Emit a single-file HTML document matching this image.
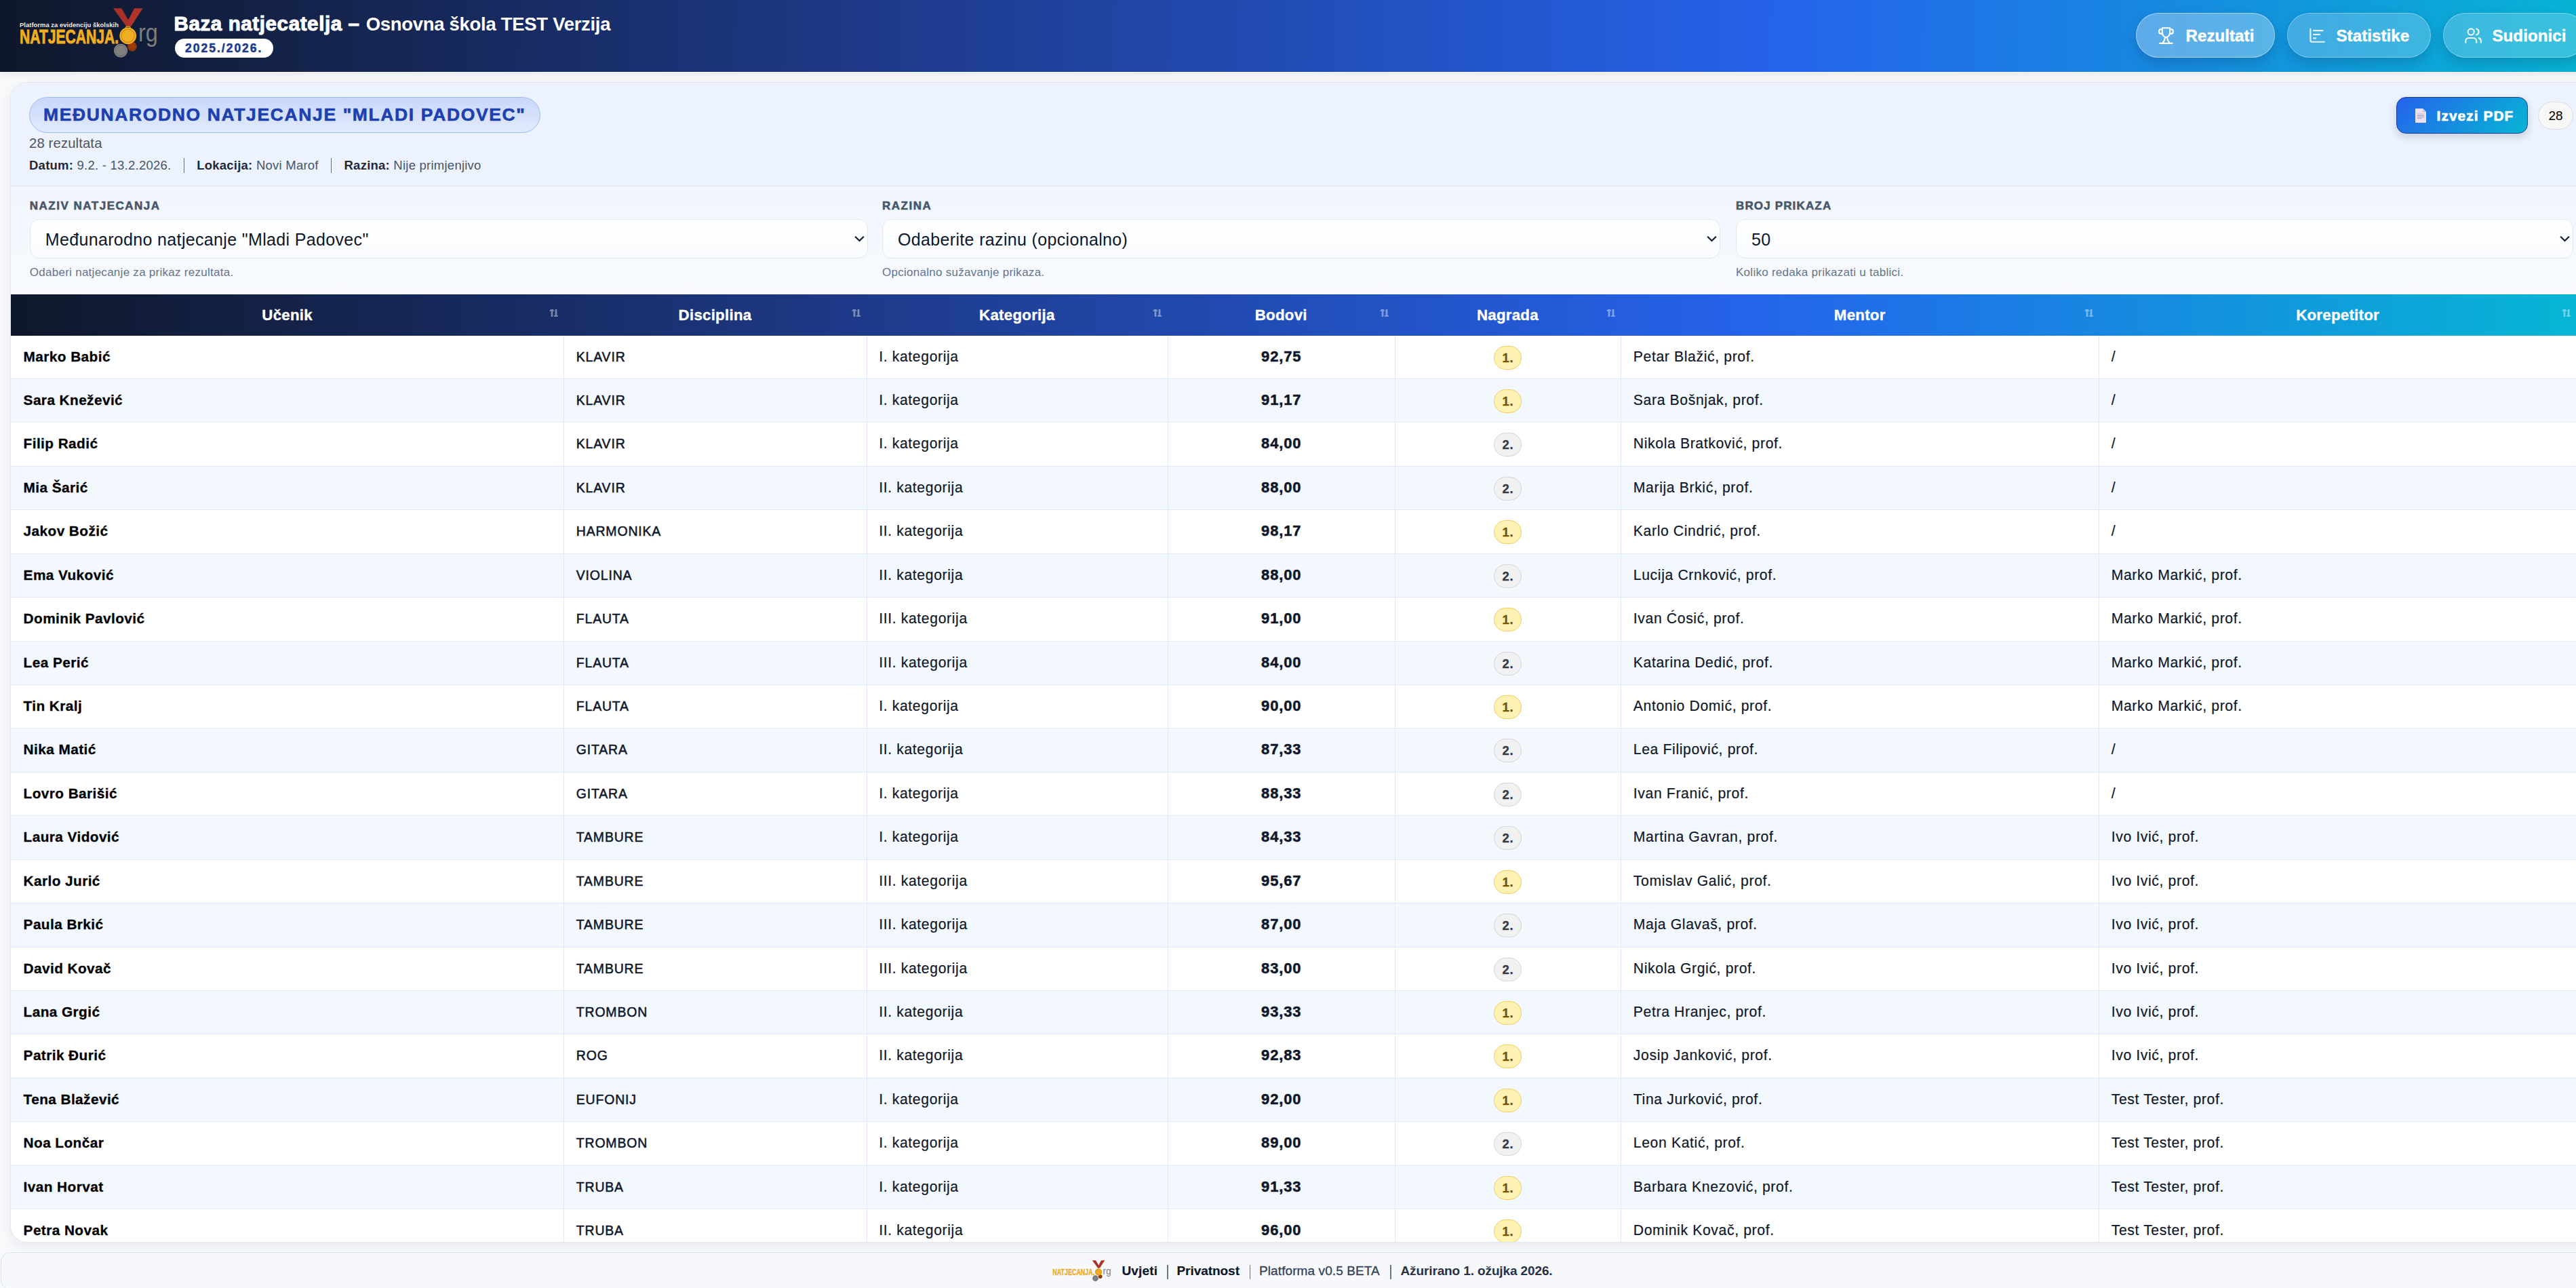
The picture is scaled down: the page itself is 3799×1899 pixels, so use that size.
<!DOCTYPE html>
<html lang="hr"><head><meta charset="utf-8"><title>Baza natjecatelja</title>
<style>
html,body{margin:0;padding:0;overflow:hidden;width:3799px;height:1899px}
#root{position:relative;width:3799px;height:1899px;overflow:hidden}
#page{position:absolute;left:0;top:0;width:3838px;height:1899px;background:#f8f9fb}
body{position:relative;background:#f8f9fb;font-family:"Liberation Sans",sans-serif;color:#0f172a}
*{box-sizing:border-box}
.hdr{position:absolute;left:0;top:0;width:3838px;height:106px;background:linear-gradient(91deg,#0f172a 0%,#1e3a8a 34%,#2563eb 68.5%,#06b6d4 100%);box-shadow:0 3px 10px rgba(15,23,42,.085);z-index:3}
.hdr:after{content:'';position:absolute;left:0;top:106px;width:100%;height:1px;background:#fafaf8}
.logo{position:absolute;left:29px;top:12px;width:205px;height:70px}
.logo .sub{position:absolute;left:0;top:19px;font-size:9.4px;font-weight:bold;color:#ececec;white-space:nowrap;letter-spacing:.05px}
.logo .nat{position:absolute;left:0;top:24.5px;font-size:29.5px;line-height:34px;font-weight:bold;color:#f0ad22;-webkit-text-stroke:.9px #f0ad22;white-space:nowrap;transform-origin:0 0;transform:scaleX(.715)}
.logo .rg{position:absolute;left:175px;top:17px;font-size:36px;line-height:40px;color:#7d7d7d;white-space:nowrap;transform-origin:0 0;transform:scaleX(.9)}
.logo svg{position:absolute;left:0;top:0}
.ttl{position:absolute;left:256.5px;top:17.5px;white-space:nowrap;color:#fff}
.ttl .a{font-size:29.5px;font-weight:bold;letter-spacing:.62px;-webkit-text-stroke:1px #fff}
.ttl .o{font-size:27.5px;font-weight:bold;margin-left:9px;letter-spacing:-.3px}
.year{position:absolute;left:258px;top:57px;width:145px;height:28px;border-radius:14px;background:#fff;color:#1e3a8a;font-weight:bold;font-size:17.5px;line-height:28px;text-align:left;padding-left:15px;letter-spacing:2px;-webkit-text-stroke:.5px #1e3a8a}
.nav{position:absolute;top:19px;height:66px;border-radius:33px;background:rgba(255,255,255,.2);border:1.5px solid rgba(255,255,255,.32);box-shadow:0 8px 18px rgba(15,23,42,.18);color:#fff;font-weight:bold;font-size:24px;letter-spacing:.1px;-webkit-text-stroke:.45px #fff;white-space:nowrap}
.nav.act{background:rgba(255,255,255,.3);border-color:rgba(255,255,255,.45)}
.nav svg{position:absolute}
.nav span{position:absolute;top:19px;line-height:28px}
.card{position:absolute;left:15px;top:121px;width:3808px;height:1711px;border:1px solid #e1e6ef;border-radius:25px;overflow:hidden;background:#fff;box-shadow:0 6px 18px rgba(15,23,42,.07);z-index:1}
.top{position:absolute;left:0;top:0;width:100%;height:153px;background:#ecf2fe;border-bottom:1px solid #dfe5f0}
.pill{position:absolute;left:27px;top:21px;width:754px;height:53px;border-radius:27px;background:linear-gradient(180deg,#c8d8fa 0%,#e2eafc 100%);border:1.5px solid #9ebcf4;color:#1e40af;font-weight:bold;font-size:26.5px;letter-spacing:1.62px;line-height:50px;padding-left:20px;-webkit-text-stroke:.6px #1e40af;white-space:nowrap}
.cnt{position:absolute;left:27px;top:77px;font-size:20.3px;letter-spacing:.13px;color:#50545c;line-height:24px}
.meta{position:absolute;left:27px;top:110.7px;font-size:18.5px;letter-spacing:.24px;color:#475569;line-height:22px;white-space:nowrap}
.meta b{color:#1e293b}
.meta i{display:inline-block;width:1.2px;height:22px;background:#64707f;vertical-align:-5px;margin:0 18.3px}
.pdf{position:absolute;left:3518px;top:21px;width:194px;height:54px;border-radius:14px;background:linear-gradient(135deg,#2563eb 0%,#06b6d4 100%);border:1.5px solid #1e3a9a;box-shadow:0 5px 12px rgba(15,23,42,.16);color:#fff;font-weight:bold;font-size:20.8px;letter-spacing:1.1px;-webkit-text-stroke:.7px #fff;white-space:nowrap}
.pdf span{position:absolute;left:58.5px;top:13.5px;line-height:26px}
.pdf svg{position:absolute;left:25.8px;top:15.5px}
.badge28{position:absolute;left:3727px;top:28px;width:52px;height:41px;border-radius:21px;background:#f7f7f7;border:1px solid #dcdcdc;font-size:19px;line-height:39px;text-align:center;color:#000}
.flt{position:absolute;left:0;top:153px;width:100%;height:159px;background:linear-gradient(180deg,#f1f5fd 0%,#f8fafe 100%)}
.fg{position:absolute;top:0;width:1236px;height:159px}
.fg .lab{position:absolute;left:0;top:19px;font-size:17px;font-weight:bold;letter-spacing:1.5px;-webkit-text-stroke:.55px #475569;color:#475569;line-height:20px}
.fg .sel{position:absolute;left:0;top:48px;width:100%;height:58px;border:1px solid #e2e8f0;border-radius:14px;background:linear-gradient(180deg,#fff 0%,#f9fbfe 100%);font-size:25px;letter-spacing:.34px;color:#0f172a;line-height:58px;padding-left:22px;white-space:nowrap}
.fg .sel svg{position:absolute;right:4px;top:22.5px}
.fg .hint{position:absolute;left:0;top:116.8px;font-size:17px;letter-spacing:.27px;color:#64748b;line-height:20px}
.tbl{position:absolute;left:0;top:312px;width:3784px;height:1400px}
.thead{position:absolute;left:0;top:0;width:3784px;height:60.6px;background:linear-gradient(90deg,#0f172a 0%,#1e3a8a 33.5%,#2563eb 67.5%,#06b6d4 100%)}
.th{position:absolute;top:0;height:60.6px;color:#fff;font-weight:bold;font-size:22.3px;letter-spacing:.25px;-webkit-text-stroke:.35px #fff;line-height:61px;text-align:center}
.th .si{position:absolute;right:8.1px;top:21.8px;width:13.6px;height:11.7px;fill:rgba(255,255,255,.42)}
.tr{position:absolute;left:0;width:3784px;height:64.43px;background:#fff;border-bottom:1px solid #e0e8fc}
.tr.alt{background:#f3f7fe}
.td{position:absolute;top:0;height:63.43px;line-height:62.5px;white-space:nowrap;border-left:1px solid #e2e9fc;font-size:21.2px;letter-spacing:.62px;color:#0f172a;padding-left:17.5px;-webkit-text-stroke:.2px #0f172a}
.td.c0{border-left:0;font-weight:bold;color:#000;padding-left:18.6px;font-size:20.8px;letter-spacing:.42px;-webkit-text-stroke:.3px #000}
.td.c1{font-size:19.5px;letter-spacing:.8px;color:#0f172a;-webkit-text-stroke:.5px #0f172a}
.td.c3{text-align:center;padding-left:0;font-weight:bold;font-size:21.9px;letter-spacing:.9px;-webkit-text-stroke:.55px #0f172a;color:#0f172a}
.td.c4{text-align:center;padding-left:0}
.b{display:inline-block;width:41px;height:35px;border-radius:18px;line-height:34px;font-size:18.5px;font-weight:bold;-webkit-text-stroke:.3px currentColor;text-align:center;vertical-align:middle;margin-top:0px}
.b1{background:#fdf2b3;border:1.2px solid #f1cf5c;color:#735400}
.b2{background:#f1f1f2;border:1.2px solid #d5d5d8;color:#333a45}
.foot{position:absolute;left:.5px;top:1845.6px;width:3836px;height:55.5px;border:1px solid #dce3ee;border-radius:14px;background:#f7f8fc;z-index:0}
.fi{position:absolute;left:0;top:0;width:100%;height:50px;text-align:center;white-space:nowrap}
.flogo{position:absolute;left:1539.5px;top:1852.8px;width:240px;height:106px;transform-origin:0 0;transform:scale(.424);z-index:2}
.flogo .logo .sub{color:#fff}
.ft{position:absolute;top:1861.5px;font-size:19px;line-height:24px;white-space:nowrap;z-index:2}
.fsep{position:absolute;top:1864.5px;width:1.5px;height:21px;background:#6b7280;z-index:2}

</style></head><body><div id="root"><div id="page">
<div class="hdr">
 <div class="logo">
  <svg width="240" height="106" viewBox="0 0 240 106" style="left:-29px;top:-12px">
   <polygon points="166.9,12.3 179.2,12.3 194.5,38.6 187.2,40.2" fill="#a8302a"/>
   <polygon points="198.2,12.3 210.6,12.3 193.4,38.8 186.6,34.2" fill="#b0342b"/>
   <circle cx="195" cy="68.6" r="6.8" fill="#9c3b0c"/>
   <circle cx="195" cy="68.6" r="5" fill="none" stroke="#7b2e08" stroke-width=".8"/>
   <circle cx="178" cy="74.6" r="10.2" fill="#808080"/>
   <circle cx="178" cy="74.6" r="8" fill="none" stroke="#666" stroke-width=".8"/>
   <path d="M184.8 41.5 a4 3.2 0 0 1 7.8 0" fill="none" stroke="#d9981a" stroke-width="1.3"/>
   <circle cx="188.7" cy="52.8" r="12.4" fill="#f0ad22"/>
   <circle cx="188.7" cy="52.8" r="9.6" fill="none" stroke="#b57a0c" stroke-width=".8"/>
  </svg>
  <div class="sub">Platforma za evidenciju školskih</div>
  <div class="nat">NATJECANJA.</div>
  <div class="rg">rg</div>
 </div>
 <div class="ttl"><span class="a">Baza natjecatelja –</span><span class="o">Osnovna škola TEST Verzija</span></div>
 <div class="year">2025./2026.</div>
 <div class="nav act" style="left:3150px;width:205px">
  <svg width="30" height="30" viewBox="0 0 30 30" style="left:28.5px;top:17.5px" fill="none" stroke="#fff" stroke-width="2.1" stroke-linecap="round" stroke-linejoin="round">
   <path d="M8.8 3.3 H20.1 V10 A5.65 7 0 0 1 8.8 10 Z"/>
   <path d="M8.8 5.3 H6.6 A2.5 3.15 0 0 0 6.6 11.6 H8.8"/>
   <path d="M20.1 5.3 H22.3 A2.5 3.15 0 0 1 22.3 11.6 H20.1"/>
   <path d="M12.9 17.4 Q12.6 21.6 9.6 25.2"/>
   <path d="M16 17.4 Q16.3 21.6 19.3 25.2"/>
   <path d="M5.2 25.9 H23.6"/>
  </svg>
  <span style="left:72.5px">Rezultati</span>
 </div>
 <div class="nav" style="left:3373px;width:212px">
  <svg width="27.2" height="27.2" viewBox="0 0 24 24" style="left:30.2px;top:18.1px" fill="none" stroke="#e6f2fb" stroke-width="1.9" stroke-linecap="round" stroke-linejoin="round">
   <path d="M3 4v15a2 2 0 0 0 2 2h16"/><path d="M7 11.3h8"/><path d="M7 16.2h3"/><path d="M7 6.3h12"/>
  </svg>
  <span style="left:71.5px">Statistike</span>
 </div>
 <div class="nav" style="left:3603px;width:211px">
  <svg width="27.2" height="27.2" viewBox="0 0 24 24" style="left:30.2px;top:19.1px" fill="none" stroke="#eef7fc" stroke-width="1.9" stroke-linecap="round" stroke-linejoin="round">
   <path d="M16 21v-2a4 4 0 0 0-4-4H6a4 4 0 0 0-4 4v2"/><circle cx="9" cy="7" r="4"/><path d="M22 21v-2a4 4 0 0 0-3-3.87"/><path d="M16 3.13a4 4 0 0 1 0 7.75"/>
  </svg>
  <span style="left:71.5px">Sudionici</span>
 </div>
</div>
<div class="card">
 <div class="top">
  <div class="pill">MEĐUNARODNO NATJECANJE "MLADI PADOVEC"</div>
  <div class="cnt">28 rezultata</div>
  <div class="meta"><b>Datum:</b> 9.2. - 13.2.2026.<i></i><b>Lokacija:</b> Novi Marof<i></i><b>Razina:</b> Nije primjenjivo</div>
  <div class="pdf">
   <svg width="18" height="22" viewBox="0 0 18 22"><path d="M1 0.8 Q1 0 1.8 0 H12 L17 5 V20.2 Q17 21 16.2 21 H1.8 Q1 21 1 20.2 Z" fill="#e9e1f1"/><path d="M12 0 V5 H17 Z" fill="#d6cedc"/><path d="M12 5 H17" stroke="#c8b4dc" stroke-width=".6"/><rect x="4" y="7.1" width="9.8" height="2.6" fill="#d3ccdb"/><path d="M4 10.4 H13.8 M4 12.5 H13.8 M4 14.5 H10.6" stroke="#aaa3b2" stroke-width="1"/></svg>
   <span>Izvezi PDF</span>
  </div>
  <div class="badge28">28</div>
 </div>
 <div class="flt">
  <div class="fg" style="left:27.8px">
   <div class="lab">NAZIV NATJECANJA</div>
   <div class="sel">Međunarodno natjecanje "Mladi Padovec"<svg width="15" height="10" viewBox="0 0 15 10"><path d="M1.2 1.8 L7.5 8 L13.8 1.8" fill="none" stroke="#0f172a" stroke-width="2.1"/></svg></div>
   <div class="hint">Odaberi natjecanje za prikaz rezultata.</div>
  </div>
  <div class="fg" style="left:1285px">
   <div class="lab">RAZINA</div>
   <div class="sel">Odaberite razinu (opcionalno)<svg width="15" height="10" viewBox="0 0 15 10"><path d="M1.2 1.8 L7.5 8 L13.8 1.8" fill="none" stroke="#0f172a" stroke-width="2.1"/></svg></div>
   <div class="hint">Opcionalno sužavanje prikaza.</div>
  </div>
  <div class="fg" style="left:2544px;width:1235px">
   <div class="lab" style="letter-spacing:1.15px">BROJ PRIKAZA</div>
   <div class="sel">50<svg width="15" height="10" viewBox="0 0 15 10"><path d="M1.2 1.8 L7.5 8 L13.8 1.8" fill="none" stroke="#0f172a" stroke-width="2.1"/></svg></div>
   <div class="hint">Koliko redaka prikazati u tablici.</div>
  </div>
 </div>

<div class="tbl">
<div class="thead"><div class="th" style="left:0.00px;width:815.30px"><span>Učenik</span><svg class="si" viewBox="0 0 13.6 11.7"><path d="M2 0 H5.7 L7.7 2.8 H5.4 V11.7 H2.6 V2.8 H0 Z M8.6 0 H11.4 V9 H13.6 L11.7 11.7 H8.3 L6.3 9 H8.6 Z"/></svg></div><div class="th" style="left:815.30px;width:446.40px"><span>Disciplina</span><svg class="si" viewBox="0 0 13.6 11.7"><path d="M2 0 H5.7 L7.7 2.8 H5.4 V11.7 H2.6 V2.8 H0 Z M8.6 0 H11.4 V9 H13.6 L11.7 11.7 H8.3 L6.3 9 H8.6 Z"/></svg></div><div class="th" style="left:1261.70px;width:444.30px"><span>Kategorija</span><svg class="si" viewBox="0 0 13.6 11.7"><path d="M2 0 H5.7 L7.7 2.8 H5.4 V11.7 H2.6 V2.8 H0 Z M8.6 0 H11.4 V9 H13.6 L11.7 11.7 H8.3 L6.3 9 H8.6 Z"/></svg></div><div class="th" style="left:1706.00px;width:334.50px"><span>Bodovi</span><svg class="si" viewBox="0 0 13.6 11.7"><path d="M2 0 H5.7 L7.7 2.8 H5.4 V11.7 H2.6 V2.8 H0 Z M8.6 0 H11.4 V9 H13.6 L11.7 11.7 H8.3 L6.3 9 H8.6 Z"/></svg></div><div class="th" style="left:2040.50px;width:333.80px"><span>Nagrada</span><svg class="si" viewBox="0 0 13.6 11.7"><path d="M2 0 H5.7 L7.7 2.8 H5.4 V11.7 H2.6 V2.8 H0 Z M8.6 0 H11.4 V9 H13.6 L11.7 11.7 H8.3 L6.3 9 H8.6 Z"/></svg></div><div class="th" style="left:2374.30px;width:704.90px"><span>Mentor</span><svg class="si" viewBox="0 0 13.6 11.7"><path d="M2 0 H5.7 L7.7 2.8 H5.4 V11.7 H2.6 V2.8 H0 Z M8.6 0 H11.4 V9 H13.6 L11.7 11.7 H8.3 L6.3 9 H8.6 Z"/></svg></div><div class="th" style="left:3079.20px;width:704.80px"><span>Korepetitor</span><svg class="si" viewBox="0 0 13.6 11.7"><path d="M2 0 H5.7 L7.7 2.8 H5.4 V11.7 H2.6 V2.8 H0 Z M8.6 0 H11.4 V9 H13.6 L11.7 11.7 H8.3 L6.3 9 H8.6 Z"/></svg></div></div>
<div class="tr" style="top:60.60px"><div class="td c0" style="left:0.00px;width:815.30px">Marko Babić</div><div class="td c1" style="left:815.30px;width:446.40px">KLAVIR</div><div class="td c2" style="left:1261.70px;width:444.30px">I. kategorija</div><div class="td c3" style="left:1706.00px;width:334.50px">92,75</div><div class="td c4" style="left:2040.50px;width:333.80px"><span class="b b1">1.</span></div><div class="td c5" style="left:2374.30px;width:704.90px">Petar Blažić, prof.</div><div class="td c6" style="left:3079.20px;width:704.80px">/</div></div><div class="tr alt" style="top:125.03px"><div class="td c0" style="left:0.00px;width:815.30px">Sara Knežević</div><div class="td c1" style="left:815.30px;width:446.40px">KLAVIR</div><div class="td c2" style="left:1261.70px;width:444.30px">I. kategorija</div><div class="td c3" style="left:1706.00px;width:334.50px">91,17</div><div class="td c4" style="left:2040.50px;width:333.80px"><span class="b b1">1.</span></div><div class="td c5" style="left:2374.30px;width:704.90px">Sara Bošnjak, prof.</div><div class="td c6" style="left:3079.20px;width:704.80px">/</div></div><div class="tr" style="top:189.46px"><div class="td c0" style="left:0.00px;width:815.30px">Filip Radić</div><div class="td c1" style="left:815.30px;width:446.40px">KLAVIR</div><div class="td c2" style="left:1261.70px;width:444.30px">I. kategorija</div><div class="td c3" style="left:1706.00px;width:334.50px">84,00</div><div class="td c4" style="left:2040.50px;width:333.80px"><span class="b b2">2.</span></div><div class="td c5" style="left:2374.30px;width:704.90px">Nikola Bratković, prof.</div><div class="td c6" style="left:3079.20px;width:704.80px">/</div></div><div class="tr alt" style="top:253.89px"><div class="td c0" style="left:0.00px;width:815.30px">Mia Šarić</div><div class="td c1" style="left:815.30px;width:446.40px">KLAVIR</div><div class="td c2" style="left:1261.70px;width:444.30px">II. kategorija</div><div class="td c3" style="left:1706.00px;width:334.50px">88,00</div><div class="td c4" style="left:2040.50px;width:333.80px"><span class="b b2">2.</span></div><div class="td c5" style="left:2374.30px;width:704.90px">Marija Brkić, prof.</div><div class="td c6" style="left:3079.20px;width:704.80px">/</div></div><div class="tr" style="top:318.32px"><div class="td c0" style="left:0.00px;width:815.30px">Jakov Božić</div><div class="td c1" style="left:815.30px;width:446.40px">HARMONIKA</div><div class="td c2" style="left:1261.70px;width:444.30px">II. kategorija</div><div class="td c3" style="left:1706.00px;width:334.50px">98,17</div><div class="td c4" style="left:2040.50px;width:333.80px"><span class="b b1">1.</span></div><div class="td c5" style="left:2374.30px;width:704.90px">Karlo Cindrić, prof.</div><div class="td c6" style="left:3079.20px;width:704.80px">/</div></div><div class="tr alt" style="top:382.75px"><div class="td c0" style="left:0.00px;width:815.30px">Ema Vuković</div><div class="td c1" style="left:815.30px;width:446.40px">VIOLINA</div><div class="td c2" style="left:1261.70px;width:444.30px">II. kategorija</div><div class="td c3" style="left:1706.00px;width:334.50px">88,00</div><div class="td c4" style="left:2040.50px;width:333.80px"><span class="b b2">2.</span></div><div class="td c5" style="left:2374.30px;width:704.90px">Lucija Crnković, prof.</div><div class="td c6" style="left:3079.20px;width:704.80px">Marko Markić, prof.</div></div><div class="tr" style="top:447.18px"><div class="td c0" style="left:0.00px;width:815.30px">Dominik Pavlović</div><div class="td c1" style="left:815.30px;width:446.40px">FLAUTA</div><div class="td c2" style="left:1261.70px;width:444.30px">III. kategorija</div><div class="td c3" style="left:1706.00px;width:334.50px">91,00</div><div class="td c4" style="left:2040.50px;width:333.80px"><span class="b b1">1.</span></div><div class="td c5" style="left:2374.30px;width:704.90px">Ivan Ćosić, prof.</div><div class="td c6" style="left:3079.20px;width:704.80px">Marko Markić, prof.</div></div><div class="tr alt" style="top:511.61px"><div class="td c0" style="left:0.00px;width:815.30px">Lea Perić</div><div class="td c1" style="left:815.30px;width:446.40px">FLAUTA</div><div class="td c2" style="left:1261.70px;width:444.30px">III. kategorija</div><div class="td c3" style="left:1706.00px;width:334.50px">84,00</div><div class="td c4" style="left:2040.50px;width:333.80px"><span class="b b2">2.</span></div><div class="td c5" style="left:2374.30px;width:704.90px">Katarina Dedić, prof.</div><div class="td c6" style="left:3079.20px;width:704.80px">Marko Markić, prof.</div></div><div class="tr" style="top:576.04px"><div class="td c0" style="left:0.00px;width:815.30px">Tin Kralj</div><div class="td c1" style="left:815.30px;width:446.40px">FLAUTA</div><div class="td c2" style="left:1261.70px;width:444.30px">I. kategorija</div><div class="td c3" style="left:1706.00px;width:334.50px">90,00</div><div class="td c4" style="left:2040.50px;width:333.80px"><span class="b b1">1.</span></div><div class="td c5" style="left:2374.30px;width:704.90px">Antonio Domić, prof.</div><div class="td c6" style="left:3079.20px;width:704.80px">Marko Markić, prof.</div></div><div class="tr alt" style="top:640.47px"><div class="td c0" style="left:0.00px;width:815.30px">Nika Matić</div><div class="td c1" style="left:815.30px;width:446.40px">GITARA</div><div class="td c2" style="left:1261.70px;width:444.30px">II. kategorija</div><div class="td c3" style="left:1706.00px;width:334.50px">87,33</div><div class="td c4" style="left:2040.50px;width:333.80px"><span class="b b2">2.</span></div><div class="td c5" style="left:2374.30px;width:704.90px">Lea Filipović, prof.</div><div class="td c6" style="left:3079.20px;width:704.80px">/</div></div><div class="tr" style="top:704.90px"><div class="td c0" style="left:0.00px;width:815.30px">Lovro Barišić</div><div class="td c1" style="left:815.30px;width:446.40px">GITARA</div><div class="td c2" style="left:1261.70px;width:444.30px">I. kategorija</div><div class="td c3" style="left:1706.00px;width:334.50px">88,33</div><div class="td c4" style="left:2040.50px;width:333.80px"><span class="b b2">2.</span></div><div class="td c5" style="left:2374.30px;width:704.90px">Ivan Franić, prof.</div><div class="td c6" style="left:3079.20px;width:704.80px">/</div></div><div class="tr alt" style="top:769.33px"><div class="td c0" style="left:0.00px;width:815.30px">Laura Vidović</div><div class="td c1" style="left:815.30px;width:446.40px">TAMBURE</div><div class="td c2" style="left:1261.70px;width:444.30px">I. kategorija</div><div class="td c3" style="left:1706.00px;width:334.50px">84,33</div><div class="td c4" style="left:2040.50px;width:333.80px"><span class="b b2">2.</span></div><div class="td c5" style="left:2374.30px;width:704.90px">Martina Gavran, prof.</div><div class="td c6" style="left:3079.20px;width:704.80px">Ivo Ivić, prof.</div></div><div class="tr" style="top:833.76px"><div class="td c0" style="left:0.00px;width:815.30px">Karlo Jurić</div><div class="td c1" style="left:815.30px;width:446.40px">TAMBURE</div><div class="td c2" style="left:1261.70px;width:444.30px">III. kategorija</div><div class="td c3" style="left:1706.00px;width:334.50px">95,67</div><div class="td c4" style="left:2040.50px;width:333.80px"><span class="b b1">1.</span></div><div class="td c5" style="left:2374.30px;width:704.90px">Tomislav Galić, prof.</div><div class="td c6" style="left:3079.20px;width:704.80px">Ivo Ivić, prof.</div></div><div class="tr alt" style="top:898.19px"><div class="td c0" style="left:0.00px;width:815.30px">Paula Brkić</div><div class="td c1" style="left:815.30px;width:446.40px">TAMBURE</div><div class="td c2" style="left:1261.70px;width:444.30px">III. kategorija</div><div class="td c3" style="left:1706.00px;width:334.50px">87,00</div><div class="td c4" style="left:2040.50px;width:333.80px"><span class="b b2">2.</span></div><div class="td c5" style="left:2374.30px;width:704.90px">Maja Glavaš, prof.</div><div class="td c6" style="left:3079.20px;width:704.80px">Ivo Ivić, prof.</div></div><div class="tr" style="top:962.62px"><div class="td c0" style="left:0.00px;width:815.30px">David Kovač</div><div class="td c1" style="left:815.30px;width:446.40px">TAMBURE</div><div class="td c2" style="left:1261.70px;width:444.30px">III. kategorija</div><div class="td c3" style="left:1706.00px;width:334.50px">83,00</div><div class="td c4" style="left:2040.50px;width:333.80px"><span class="b b2">2.</span></div><div class="td c5" style="left:2374.30px;width:704.90px">Nikola Grgić, prof.</div><div class="td c6" style="left:3079.20px;width:704.80px">Ivo Ivić, prof.</div></div><div class="tr alt" style="top:1027.05px"><div class="td c0" style="left:0.00px;width:815.30px">Lana Grgić</div><div class="td c1" style="left:815.30px;width:446.40px">TROMBON</div><div class="td c2" style="left:1261.70px;width:444.30px">II. kategorija</div><div class="td c3" style="left:1706.00px;width:334.50px">93,33</div><div class="td c4" style="left:2040.50px;width:333.80px"><span class="b b1">1.</span></div><div class="td c5" style="left:2374.30px;width:704.90px">Petra Hranjec, prof.</div><div class="td c6" style="left:3079.20px;width:704.80px">Ivo Ivić, prof.</div></div><div class="tr" style="top:1091.48px"><div class="td c0" style="left:0.00px;width:815.30px">Patrik Đurić</div><div class="td c1" style="left:815.30px;width:446.40px">ROG</div><div class="td c2" style="left:1261.70px;width:444.30px">II. kategorija</div><div class="td c3" style="left:1706.00px;width:334.50px">92,83</div><div class="td c4" style="left:2040.50px;width:333.80px"><span class="b b1">1.</span></div><div class="td c5" style="left:2374.30px;width:704.90px">Josip Janković, prof.</div><div class="td c6" style="left:3079.20px;width:704.80px">Ivo Ivić, prof.</div></div><div class="tr alt" style="top:1155.91px"><div class="td c0" style="left:0.00px;width:815.30px">Tena Blažević</div><div class="td c1" style="left:815.30px;width:446.40px">EUFONIJ</div><div class="td c2" style="left:1261.70px;width:444.30px">I. kategorija</div><div class="td c3" style="left:1706.00px;width:334.50px">92,00</div><div class="td c4" style="left:2040.50px;width:333.80px"><span class="b b1">1.</span></div><div class="td c5" style="left:2374.30px;width:704.90px">Tina Jurković, prof.</div><div class="td c6" style="left:3079.20px;width:704.80px">Test Tester, prof.</div></div><div class="tr" style="top:1220.34px"><div class="td c0" style="left:0.00px;width:815.30px">Noa Lončar</div><div class="td c1" style="left:815.30px;width:446.40px">TROMBON</div><div class="td c2" style="left:1261.70px;width:444.30px">I. kategorija</div><div class="td c3" style="left:1706.00px;width:334.50px">89,00</div><div class="td c4" style="left:2040.50px;width:333.80px"><span class="b b2">2.</span></div><div class="td c5" style="left:2374.30px;width:704.90px">Leon Katić, prof.</div><div class="td c6" style="left:3079.20px;width:704.80px">Test Tester, prof.</div></div><div class="tr alt" style="top:1284.77px"><div class="td c0" style="left:0.00px;width:815.30px">Ivan Horvat</div><div class="td c1" style="left:815.30px;width:446.40px">TRUBA</div><div class="td c2" style="left:1261.70px;width:444.30px">I. kategorija</div><div class="td c3" style="left:1706.00px;width:334.50px">91,33</div><div class="td c4" style="left:2040.50px;width:333.80px"><span class="b b1">1.</span></div><div class="td c5" style="left:2374.30px;width:704.90px">Barbara Knezović, prof.</div><div class="td c6" style="left:3079.20px;width:704.80px">Test Tester, prof.</div></div><div class="tr" style="top:1349.20px"><div class="td c0" style="left:0.00px;width:815.30px">Petra Novak</div><div class="td c1" style="left:815.30px;width:446.40px">TRUBA</div><div class="td c2" style="left:1261.70px;width:444.30px">II. kategorija</div><div class="td c3" style="left:1706.00px;width:334.50px">96,00</div><div class="td c4" style="left:2040.50px;width:333.80px"><span class="b b1">1.</span></div><div class="td c5" style="left:2374.30px;width:704.90px">Dominik Kovač, prof.</div><div class="td c6" style="left:3079.20px;width:704.80px">Test Tester, prof.</div></div>
</div>
</div>
<div class="foot"></div>
<div class="flogo"><div class="logo">
  <svg width="240" height="106" viewBox="0 0 240 106" style="left:-29px;top:-12px">
   <polygon points="166.9,12.3 179.2,12.3 194.5,38.6 187.2,40.2" fill="#a8302a"/>
   <polygon points="198.2,12.3 210.6,12.3 193.4,38.8 186.6,34.2" fill="#b0342b"/>
   <circle cx="195" cy="68.6" r="6.8" fill="#9c3b0c"/>
   <circle cx="195" cy="68.6" r="5" fill="none" stroke="#7b2e08" stroke-width=".8"/>
   <circle cx="178" cy="74.6" r="10.2" fill="#808080"/>
   <circle cx="178" cy="74.6" r="8" fill="none" stroke="#666" stroke-width=".8"/>
   <path d="M184.8 41.5 a4 3.2 0 0 1 7.8 0" fill="none" stroke="#d9981a" stroke-width="1.3"/>
   <circle cx="188.7" cy="52.8" r="12.4" fill="#f0ad22"/>
   <circle cx="188.7" cy="52.8" r="9.6" fill="none" stroke="#b57a0c" stroke-width=".8"/>
  </svg>
  <div class="sub">Platforma za evidenciju školskih</div>
  <div class="nat">NATJECANJA.</div>
  <div class="rg">rg</div>
 </div>
 </div>
<div class="ft" style="left:1654.5px;color:#0f172a;font-weight:bold;letter-spacing:.15px;-webkit-text-stroke:.2px #0f172a">Uvjeti</div>
<div class="fsep" style="left:1721px"></div>
<div class="ft" style="left:1735.5px;color:#0f172a;font-weight:bold;letter-spacing:-.05px;-webkit-text-stroke:.2px #0f172a">Privatnost</div>
<div class="fsep" style="left:1842.5px"></div>
<div class="ft" style="left:1857px;color:#334155;letter-spacing:.1px;-webkit-text-stroke:.3px #334155">Platforma v0.5 BETA</div>
<div class="fsep" style="left:2050px"></div>
<div class="ft" style="left:2065.5px;color:#283142;font-weight:bold;letter-spacing:-.12px">Ažurirano 1. ožujka 2026.</div>

</div></div></body></html>
